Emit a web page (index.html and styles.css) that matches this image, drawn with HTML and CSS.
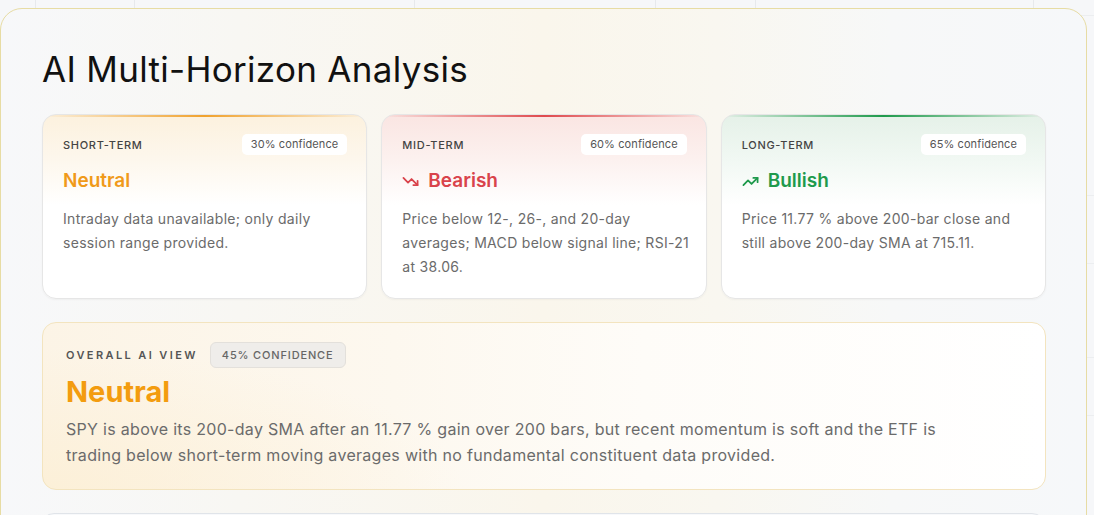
FILE: index.html
```html
<!DOCTYPE html>
<html lang="en">
<head>
<meta charset="utf-8">
<title>AI Multi-Horizon Analysis</title>
<link rel="stylesheet" href="styles.css">
</head>
<body>
<div class="backdrop" aria-hidden="true">
  <span class="vline v1"></span><span class="vline v2"></span><span class="vline v3"></span>
  <span class="vline v4"></span><span class="vline v5"></span><span class="vline v6"></span>
  <span class="hline h1"></span><span class="hline h2"></span><span class="hline h3"></span>
  <span class="hline h4"></span><span class="hline h5"></span>
</div>
<section class="panel">
  <h2 class="title">AI Multi-Horizon Analysis</h2>
  <div class="horizons">
    <article class="hcard neutral">
      <div class="hcard-head">
        <span class="hlabel">SHORT-TERM</span>
        <span class="conf">30% confidence</span>
      </div>
      <div class="signal">Neutral</div>
      <p class="desc">Intraday data unavailable; only daily session range provided.</p>
    </article>
    <article class="hcard bearish">
      <div class="hcard-head">
        <span class="hlabel">MID-TERM</span>
        <span class="conf">60% confidence</span>
      </div>
      <div class="signal">
        <svg class="trend" viewBox="0 0 24 24" fill="none" stroke="currentColor" stroke-width="2.5" stroke-linecap="round" stroke-linejoin="round"><polyline points="22 17 13.5 8.5 8.5 13.5 2 7"/><polyline points="16 17 22 17 22 11"/></svg>
        Bearish
      </div>
      <p class="desc">Price below 12-, 26-, and 20-day averages; MACD below signal line; <span class="nowrap">RSI-21</span> at 38.06.</p>
    </article>
    <article class="hcard bullish">
      <div class="hcard-head">
        <span class="hlabel">LONG-TERM</span>
        <span class="conf">65% confidence</span>
      </div>
      <div class="signal">
        <svg class="trend" viewBox="0 0 24 24" fill="none" stroke="currentColor" stroke-width="2.5" stroke-linecap="round" stroke-linejoin="round"><polyline points="22 7 13.5 15.5 8.5 10.5 2 17"/><polyline points="16 7 22 7 22 13"/></svg>
        Bullish
      </div>
      <p class="desc">Price 11.77 % above 200-bar close and still above 200-day SMA at 715.11.</p>
    </article>
  </div>
  <div class="overall">
    <div class="overall-head">
      <span class="olabel">OVERALL AI VIEW</span>
      <span class="oconf">45% CONFIDENCE</span>
    </div>
    <div class="overall-signal">Neutral</div>
    <p class="overall-text">SPY is above its 200-day SMA after an 11.77 % gain over 200 bars, but recent momentum is soft and the ETF is trading below short-term moving averages with no fundamental constituent data provided.</p>
  </div>
  <div class="next-block"></div>
</section>
</body>
</html>
```
FILE: styles.css
```css
* { box-sizing: border-box; }

html, body {
  margin: 0;
  padding: 0;
}

body {
  background: #f6f7f9;
  font-family: Inter, "DejaVu Sans", sans-serif;
  color: #111;
  position: relative;
  overflow: hidden;
  height: 515px;
}

.backdrop {
  position: absolute;
  inset: 0;
  z-index: 0;
}
.vline {
  position: absolute;
  top: 0;
  height: 20px;
  width: 1px;
  background: #e7e9ec;
}
.v1 { left: 35px; }
.v2 { left: 134px; }
.v3 { left: 414px; }
.v4 { left: 655px; }
.v5 { left: 755px; }
.v6 { left: 1033px; }
.hline {
  position: absolute;
  left: 1080px;
  right: 0;
  height: 1px;
  background: #eceef0;
}
.h1 { top: 15px; }
.h2 { top: 195px; }
.h3 { top: 263px; }
.h4 { top: 357px; }
.h5 { top: 415px; }

.panel {
  position: relative;
  z-index: 1;
  margin-top: 8px;
  width: 1087px;
  height: 540px;
  border: 1px solid #e7dca4;
  border-radius: 22px;
  padding: 39px 40px 0 41px;
  background: linear-gradient(90deg, #f7f8fa 0%, #f8f7f3 22%, #faf6ec 50%, #f9f7f0 66%, #f7f8f8 82%, #f6f8fa 100%);
}

.title {
  margin: 0;
  font-size: 35px;
  line-height: 42px;
  font-weight: 400;
  color: #111;
  letter-spacing: 0.3px;
}

.horizons {
  margin-top: 24px;
  display: grid;
  grid-template-columns: repeat(3, 1fr);
  gap: 14px;
}

.hcard {
  position: relative;
  border: 1px solid #e6e6e6;
  border-radius: 14px;
  padding: 19px 19px 19px 20px;
  background: #fff;
  box-shadow: 0 1px 2px rgba(0, 0, 0, 0.04);
  overflow: hidden;
}
.hcard::before {
  content: "";
  position: absolute;
  left: 0;
  right: 0;
  top: 0;
  height: 2px;
}
.hcard.neutral { background: linear-gradient(180deg, #fcf1de 0px, #fdf7ed 45px, #ffffff 90px); }
.hcard.neutral::before { background: linear-gradient(90deg, rgba(240,160,40,0) 0%, #f0a22e 50%, rgba(240,160,40,0) 100%); }
.hcard.bearish { background: linear-gradient(180deg, #fae5e2 0px, #fcf1ef 45px, #ffffff 90px); }
.hcard.bearish::before { background: linear-gradient(90deg, rgba(224,72,72,0) 0%, #df4a4e 50%, rgba(224,72,72,0) 100%); }
.hcard.bullish { background: linear-gradient(180deg, #e5f1e8 0px, #f1f8f3 45px, #ffffff 90px); }
.hcard.bullish::before { background: linear-gradient(90deg, rgba(34,160,80,0) 0%, #1f9a4c 50%, rgba(34,160,80,0) 100%); }

.hcard-head {
  display: flex;
  justify-content: space-between;
  align-items: center;
  height: 21px;
}
.hlabel {
  font-size: 11px;
  font-weight: 500;
  letter-spacing: 0.7px;
  color: #444;
}
.conf {
  background: #fff;
  border-radius: 5px;
  height: 21px;
  line-height: 21px;
  padding: 0 9px;
  font-size: 11px;
  color: #555;
  letter-spacing: 0.1px;
}

.signal {
  margin-top: 14px;
  display: flex;
  align-items: center;
  gap: 9px;
  font-size: 19px;
  line-height: 24px;
  font-weight: 600;
}
.neutral .signal { color: #f09a1a; }
.bearish .signal { color: #d9434b; }
.bullish .signal { color: #1f9a4c; }
.trend {
  width: 17px;
  height: 17px;
  flex: none;
}

.desc {
  margin: 14px -6px 0 0;
  font-size: 14px;
  line-height: 24px;
  letter-spacing: 0.3px;
  color: #6b6b6b;
}
.nowrap { white-space: nowrap; }

.overall {
  margin-top: 23px;
  border: 1px solid #f3e4bf;
  border-radius: 14px;
  padding: 19px 23px 21px 23px;
  background:
    radial-gradient(ellipse 60% 120% at 0% 100%, rgba(252, 238, 210, 0.7), rgba(255, 255, 255, 0) 70%),
    linear-gradient(90deg, #fcf4e6 0%, #fdf8ef 35%, #fefcf8 60%, #ffffff 100%);
}
.overall-head {
  display: flex;
  align-items: center;
  gap: 12px;
  height: 26px;
}
.olabel {
  font-size: 11px;
  font-weight: 600;
  letter-spacing: 2.4px;
  color: #555;
}
.oconf {
  height: 26px;
  line-height: 24px;
  padding: 0 11px;
  border: 1px solid #e3e0db;
  border-radius: 6px;
  background: #efedea;
  font-size: 11px;
  font-weight: 500;
  letter-spacing: 0.85px;
  color: #666;
}
.overall-signal {
  margin-top: 7px;
  font-size: 29px;
  line-height: 34px;
  font-weight: 700;
  color: #f39c0f;
}
.overall-text {
  margin: 7px 0 0;
  max-width: 890px;
  font-size: 16px;
  line-height: 26px;
  letter-spacing: 0.3px;
  color: #6b6b6b;
}

.next-block {
  margin: 23px 0 0 -2px;
  height: 40px;
  border: 1px solid #e0e4e9;
  border-radius: 14px;
  background: #f8f9fb;
}
```
